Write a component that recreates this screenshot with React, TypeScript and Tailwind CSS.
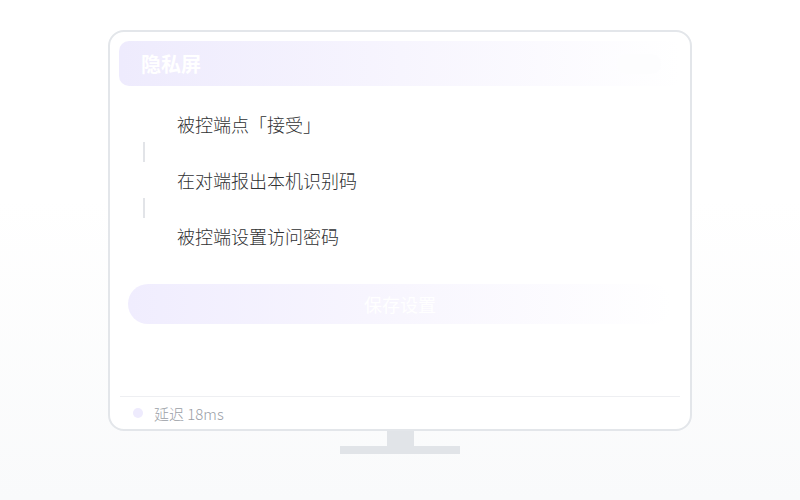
import React from "react";

const steps = ["被控端点「接受」", "在对端报出本机识别码", "被控端设置访问密码"];

export default function App() {
  return (
    <div
      className="w-[800px] h-[500px] flex flex-col items-center pt-[30px] bg-gradient-to-b from-white from-40% to-[#f9fafb]"
      style={{ fontFamily: '"Noto Sans CJK SC", "Noto Sans", sans-serif' }}
    >
      <div className="w-[584px] h-[401px] rounded-[16px] border-2 border-[#e3e6ea] bg-white flex flex-col px-[9px] pt-[9px]">
        <div className="h-[45px] shrink-0 rounded-[10px] bg-gradient-to-r from-[#eeebfd] via-[#f7f5fe] to-white flex items-center justify-between pl-[22px] pr-[20px]">
          <span className="text-white font-bold text-[20px] leading-none">隐私屏</span>
          <div className="w-[44px] h-[20px] rounded-full bg-[#fdfdfe]" />
        </div>

        <div className="mt-[20px] flex flex-col">
          {steps.map((s, i) => (
            <React.Fragment key={s}>
              {i > 0 && <div className="ml-[24px] w-[2px] h-[20px] bg-[#e2e4e8]" />}
              <div className="h-[36px] flex items-center pl-[58px]">
                <span className="text-[18px] font-light text-[#303133] leading-none">{s}</span>
              </div>
            </React.Fragment>
          ))}
        </div>

        <div className="mt-[30px] mx-[9px] h-[40px] shrink-0 rounded-full bg-gradient-to-r from-[#f0edfe] via-[#f8f6fe] to-white flex items-center justify-center">
          <span className="text-white text-[18px] leading-none">保存设置</span>
        </div>

        <div className="mt-auto border-t border-[#eeeff2] mx-[1px] h-[33px] shrink-0 flex items-center pl-[13px] gap-[11px]">
          <div className="w-[10px] h-[10px] rounded-full bg-[#eeebfd]" />
          <span className="text-[15px] font-light text-[#9a9ea6] leading-none">延迟 18ms</span>
        </div>
      </div>
      <div className="w-[27px] h-[15px] bg-[#e1e4e8]" />
      <div className="w-[120px] h-[8px] bg-[#e1e4e8]" />
    </div>
  );
}
